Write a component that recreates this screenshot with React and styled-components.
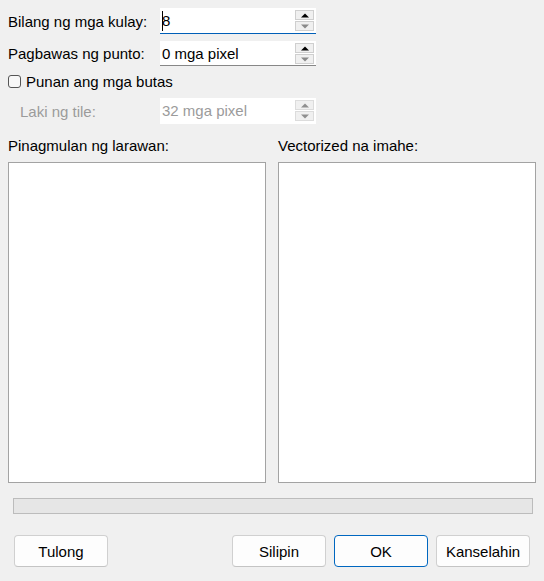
import React from "react";
import styled, { createGlobalStyle, css } from "styled-components";

const GlobalStyle = createGlobalStyle`
  html, body { margin: 0; padding: 0; background: #f0f0f0; }
  body { font-family: "Liberation Sans", Arial, sans-serif; font-size: 15px; color: #000; }
  * { box-sizing: border-box; }
`;

const Window = styled.div`
  width: 544px;
  height: 581px;
  background: #f0f0f0;
  display: flex;
  flex-direction: column;
  overflow: hidden;
`;

const Settings = styled.div`
  display: flex;
  flex-direction: column;
  padding-left: 8px;
`;

const SettingRow = styled.div`
  display: grid;
  grid-template-columns: 152px 156px;
  align-items: center;
  height: ${(p) => p.$h}px;
  margin-top: ${(p) => p.$mt}px;
`;

const Label = styled.span`
  line-height: 18px;
  padding-top: 1px;
  white-space: nowrap;
  color: ${(p) => (p.$disabled ? "#9b9b9b" : "#000")};
  padding-left: ${(p) => (p.$indent ? 12 : 0)}px;
`;

const SpinBox = styled.div`
  height: ${(p) => p.$h}px;
  background: #fff;
  display: flex;
  align-items: flex-start;
  border-bottom: 1px solid
    ${(p) => (p.$focused ? "#005fb8" : p.$disabled ? "#fff" : "#878787")};
`;

const SpinText = styled.div`
  flex: 1;
  align-self: center;
  line-height: 18px;
  padding: 1px 0 0 2px;
  white-space: nowrap;
  color: ${(p) => (p.$disabled ? "#9b9b9b" : "#000")};
`;

const Caret = styled.span`
  display: inline-block;
  width: 1px;
  height: 20px;
  background: #000;
  vertical-align: -5px;
  margin-right: -1px;
`;

const SpinButtons = styled.div`
  width: 19px;
  margin: 2px 2px 0 0;
  display: flex;
  flex-direction: column;
  gap: 1px;
`;

const SpinButton = styled.div`
  height: 10px;
  background: #f0f0f0;
  border: 1px solid ${(p) => (p.$disabled ? "#dcdcdc" : "#cfcfcf")};
  display: flex;
  align-items: center;
  justify-content: center;
`;

const Arrow = ({ dir, color }) => (
  <svg width="8" height="5" viewBox="0 0 8 5">
    {dir === "up" ? (
      <polygon points="0,4.5 8,4.5 4,0.5" fill={color} />
    ) : (
      <polygon points="0,0.5 8,0.5 4,4.5" fill={color} />
    )}
  </svg>
);

const Spinner = ({ value, focused, disabled, h, upColor, downColor }) => (
  <SpinBox $h={h} $focused={focused} $disabled={disabled}>
    <SpinText $disabled={disabled}>
      {focused && <Caret />}
      {value}
    </SpinText>
    <SpinButtons>
      <SpinButton $disabled={disabled}>
        <Arrow dir="up" color={upColor} />
      </SpinButton>
      <SpinButton $disabled={disabled}>
        <Arrow dir="down" color={downColor} />
      </SpinButton>
    </SpinButtons>
  </SpinBox>
);

const CheckRow = styled.label`
  display: flex;
  align-items: center;
  gap: 5px;
  height: 19px;
  margin-top: 6px;
`;

const CheckBox = styled.span`
  width: 13px;
  height: 13px;
  border: 1px solid #555;
  border-radius: 3px;
  background: #f7f7f7;
  flex: none;
`;

const CheckText = styled.span`
  line-height: 18px;
  padding-top: 1px;
`;

const Previews = styled.div`
  display: grid;
  grid-template-columns: 258px 258px;
  column-gap: 12px;
  margin: 13px 0 0 8px;
`;

const PreviewColumn = styled.div`
  display: flex;
  flex-direction: column;
  gap: 7px;
`;

const PreviewLabel = styled.span`
  line-height: 18px;
`;

const PreviewPane = styled.div`
  height: 321px;
  background: #fff;
  border: 1px solid #a3a3a3;
`;

const ProgressBar = styled.div`
  height: 16px;
  margin: 15px 11px 0 13px;
  background: #e6e6e6;
  border: 1px solid #bcbcbc;
`;

const ButtonBar = styled.div`
  display: flex;
  align-items: center;
  gap: 8px;
  margin: 21px 14px 0 14px;
`;

const Spacer = styled.div`
  flex: 1;
`;

const Button = styled.button`
  width: 94px;
  height: 32px;
  font-family: inherit;
  font-size: 15px;
  color: #000;
  background: #fdfdfd;
  border: 1px solid ${(p) => (p.$default ? "#0067c0" : "#d0d0d0")};
  ${(p) =>
    !p.$default &&
    css`
      border-bottom-color: #c4c4c4;
    `}
  border-radius: 4px;
  padding: 1px 0 0;
  line-height: 18px;
`;

export default function App() {
  return (
    <Window>
      <GlobalStyle />
      <Settings>
        <SettingRow $h={26} $mt={8}>
          <Label>Bilang ng mga kulay:</Label>
          <Spinner value="8" focused h={26} upColor="#000" downColor="#8a8a8a" />
        </SettingRow>
        <SettingRow $h={25} $mt={7}>
          <Label>Pagbawas ng punto:</Label>
          <Spinner value="0 mga pixel" h={25} upColor="#000" downColor="#8a8a8a" />
        </SettingRow>
        <CheckRow>
          <CheckBox />
          <CheckText>Punan ang mga butas</CheckText>
        </CheckRow>
        <SettingRow $h={26} $mt={7}>
          <Label $disabled $indent>
            Laki ng tile:
          </Label>
          <Spinner value="32 mga pixel" disabled h={26} upColor="#8f8f8f" downColor="#8f8f8f" />
        </SettingRow>
      </Settings>
      <Previews>
        <PreviewColumn>
          <PreviewLabel>Pinagmulan ng larawan:</PreviewLabel>
          <PreviewPane />
        </PreviewColumn>
        <PreviewColumn>
          <PreviewLabel>Vectorized na imahe:</PreviewLabel>
          <PreviewPane />
        </PreviewColumn>
      </Previews>
      <ProgressBar />
      <ButtonBar>
        <Button>Tulong</Button>
        <Spacer />
        <Button>Silipin</Button>
        <Button $default>OK</Button>
        <Button>Kanselahin</Button>
      </ButtonBar>
    </Window>
  );
}
